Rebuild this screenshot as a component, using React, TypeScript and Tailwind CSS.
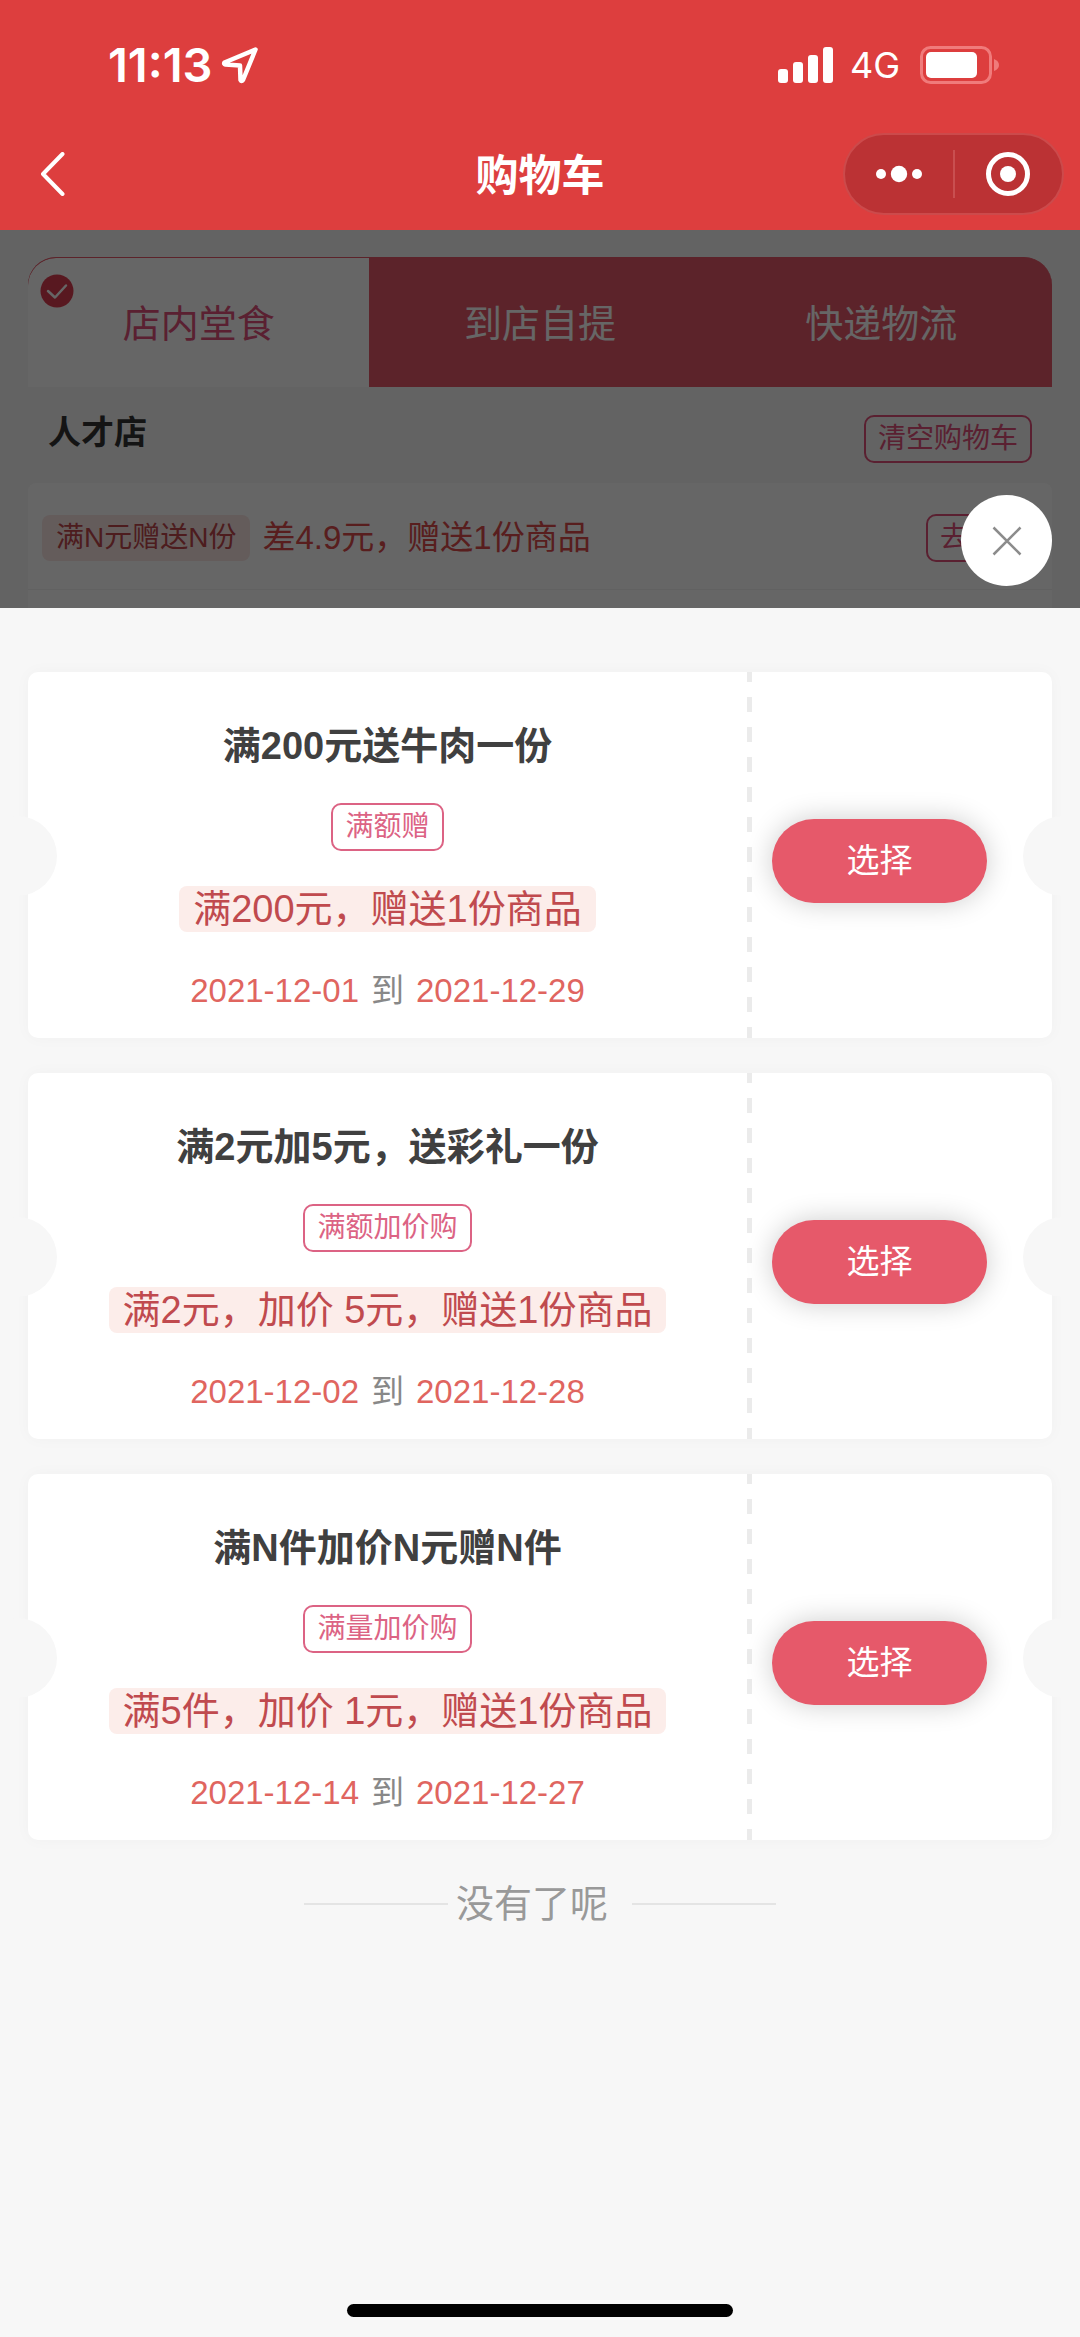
import { useState } from 'react';

const tabs = ['店内堂食', '到店自提', '快递物流'];

const coupons = [
  { title: '满200元送牛肉一份', type: '满额赠', rule: '满200元，赠送1份商品', start: '2021-12-01', end: '2021-12-29' },
  { title: '满2元加5元，送彩礼一份', type: '满额加价购', rule: '满2元，加价 5元，赠送1份商品', start: '2021-12-02', end: '2021-12-28' },
  { title: '满N件加价N元赠N件', type: '满量加价购', rule: '满5件，加价 1元，赠送1份商品', start: '2021-12-14', end: '2021-12-27' },
];

function StatusBar() {
  return (
    <div className="flex h-[118px] items-center justify-between pt-3 pr-20 pl-[108px]">
      <div className="flex items-center gap-2">
        <span className="font-['Inter',sans-serif] text-[47px] leading-[48px] font-semibold">11:13</span>
        <svg width="38" height="38" viewBox="0 0 38 38" fill="none" stroke="currentColor" strokeWidth="4.500" strokeLinejoin="round">
          <path d="M34.500 3.500 L3.500 16.500 Q2.500 18 4.500 18.500 L19 19.500 L19.500 34 Q20.500 36 22 34 Z" />
        </svg>
      </div>
      <div className="flex items-center">
        <svg width="56" height="36" viewBox="0 0 56 36" fill="currentColor">
          <rect x="0" y="22" width="10" height="14" rx="3" />
          <rect x="15" y="15" width="10" height="21" rx="3" />
          <rect x="30" y="8" width="10" height="28" rx="3" />
          <rect x="45" y="0" width="10" height="36" rx="3" />
        </svg>
        <span className="ml-4 font-['Inter',sans-serif] text-4xl leading-[48px]">4G</span>
        <svg className="ml-5" width="80" height="38" viewBox="0 0 80 38" fill="none">
          <rect x="1.500" y="1.500" width="69" height="35" rx="9" stroke="#f07b7b" strokeWidth="3" />
          <rect x="6" y="6" width="51" height="26" rx="5" fill="#fff" />
          <path d="M74 13 Q79 15 79 19 Q79 23 74 25 Z" fill="#f07b7b" />
        </svg>
      </div>
    </div>
  );
}

function NavBar() {
  return (
    <div className="grid h-28 grid-cols-[221px_1fr_221px] items-center px-4">
      <button type="button" aria-label="返回" className="justify-self-start pl-6">
        <svg width="26" height="44" viewBox="0 0 26 44" fill="none" stroke="currentColor" strokeWidth="4" strokeLinecap="round" strokeLinejoin="round">
          <path d="M22.500 2 L3 22 L22.500 42" />
        </svg>
      </button>
      <h1 className="pt-1 text-center text-[43px] leading-[48px] font-bold">购物车</h1>
      <div className="flex h-[82px] items-center rounded-full border-2 border-[#cc4a4b] bg-[#bb3234]">
        <button type="button" aria-label="更多" className="flex h-12 flex-1 items-center justify-center border-r-2 border-[#c94f50]">
          <svg width="48" height="20" viewBox="0 0 48 20" fill="currentColor">
            <circle cx="6" cy="10" r="5" />
            <circle cx="24" cy="10" r="8.200" />
            <circle cx="42" cy="10" r="5" />
          </svg>
        </button>
        <button type="button" aria-label="关闭小程序" className="flex flex-1 items-center justify-center">
          <svg width="46" height="46" viewBox="0 0 46 46">
            <circle cx="23" cy="23" r="19.500" fill="none" stroke="currentColor" strokeWidth="5" />
            <circle cx="23" cy="23" r="8" fill="currentColor" />
          </svg>
        </button>
      </div>
    </div>
  );
}

function CartPage() {
  const [active, setActive] = useState(0);

  return (
    <section className="relative overflow-hidden px-7 pt-[27px]">
      <div className="flex overflow-hidden rounded-t-[28px] border-t border-[#e6596a] bg-[#e6596a]">
        {tabs.map((tab, i) => (
          <button
            key={tab}
            type="button"
            onClick={() => setActive(i)}
            className={
              i === active
                ? 'relative h-[129px] flex-1 rounded-tl-[28px] bg-white pt-1 text-[38px] text-[#e0527a]'
                : 'relative h-[129px] flex-1 pt-1 text-[38px] text-white'
            }
          >
            {i === active && (
              <svg className="absolute top-4 left-3" width="34" height="34" viewBox="0 0 34 34" fill="none">
                <circle cx="17" cy="17" r="16.500" fill="#dd3e50" />
                <path d="M8 17 L15 23.500 L26 11.500" stroke="#fff" strokeWidth="2.500" strokeLinecap="round" strokeLinejoin="round" />
              </svg>
            )}
            {tab}
          </button>
        ))}
      </div>

      <div className="flex h-24 items-start justify-between px-5 pt-7">
        <h2 className="text-[33px] leading-9 font-bold text-[#333]">人才店</h2>
        <button type="button" className="h-12 rounded-[10px] border-2 border-[#e0527a] px-3 text-[28px] leading-[40px] text-[#e0527a]">
          清空购物车
        </button>
      </div>

      <div className="rounded-t-lg bg-white pb-[18px]">
        <div className="flex h-[107px] items-center border-b border-[#f2f2f2] px-[14px] pt-1">
          <span className="rounded-lg bg-[#fae6e4] px-[14px] text-[28px] leading-[46px] text-[#c0484c]">满N元赠送N份</span>
          <span className="ml-3 text-[33px] leading-[40px] text-[#dd4b4b]">差4.9元，赠送1份商品</span>
          <button type="button" className="ml-auto h-12 rounded-[10px] border-2 border-[#e0527a] px-3 text-[28px] leading-[40px] text-[#e0527a]">
            去凑单
          </button>
        </div>
      </div>

      <div className="absolute inset-0 bg-black/60" />
      <button
        type="button"
        aria-label="关闭"
        className="absolute right-7 bottom-[22px] flex size-[91px] items-center justify-center rounded-full bg-white"
      >
        <svg width="30" height="30" viewBox="0 0 30 30" fill="none" stroke="#8c8c8c" strokeWidth="2.500">
          <path d="M1.500 1.500 L28.500 28.500 M28.500 1.500 L1.500 28.500" />
        </svg>
      </button>
    </section>
  );
}

function CouponCard({ coupon }: { coupon: (typeof coupons)[number] }) {
  return (
    <li className="relative flex rounded-[10px] bg-white shadow-[0_0_16px_rgba(0,0,0,0.03)]">
      <div className="flex flex-1 flex-col items-center gap-[35px] pt-[52px] pb-[23px]">
        <h3 className="text-[38px] leading-[44px] font-bold text-[#404040]">{coupon.title}</h3>
        <span className="rounded-[10px] border-2 border-[#dc6384] px-3 text-[28px] leading-[44px] text-[#dc6384]">
          {coupon.type}
        </span>
        <p className="rounded-lg bg-[#fcedea] px-[14px] text-[38px] leading-[46px] text-[#c04a4e]">{coupon.rule}</p>
        <p className="flex gap-3 text-[33px] leading-[48px] text-[#e0655f]">
          <time>{coupon.start}</time>
          <span className="text-[#888]">到</span>
          <time>{coupon.end}</time>
        </p>
      </div>
      <div className="w-[5px] bg-[repeating-linear-gradient(to_bottom,#ebebeb_0px,#ebebeb_10px,transparent_10px,transparent_25px,#ebebeb_25px,#ebebeb_30px)]" />
      <div className="flex w-[300px] items-center pt-3 pl-5">
        <button
          type="button"
          className="h-[84px] w-[215px] rounded-full bg-[#e6596a] text-[33px] text-white shadow-[0_0_28px_rgba(0,0,0,0.2)]"
        >
          选择
        </button>
      </div>
      {/* ticket notches */}
      <div className="absolute top-36 -left-[51px] size-20 rounded-full bg-[#f7f7f7]" />
      <div className="absolute top-36 -right-[51px] size-20 rounded-full bg-[#f7f7f7]" />
    </li>
  );
}

export default function App() {
  return (
    <div className="flex min-h-screen flex-col overflow-x-hidden bg-[#f7f7f7] font-['Liberation_Sans','Noto_Sans_CJK_SC',sans-serif]">
      <header className="bg-[#dd3e3e] text-white">
        <StatusBar />
        <NavBar />
      </header>

      <CartPage />

      <main className="flex flex-1 flex-col px-7 pt-16">
        <ul className="flex flex-col gap-[35px]">
          {coupons.map((coupon) => (
            <CouponCard key={coupon.title} coupon={coupon} />
          ))}
        </ul>
        <div className="mt-10 flex items-center justify-center text-[38px] leading-[48px] text-[#999]">
          <span className="h-[2px] w-36 bg-[#e4e4e4]" />
          <span className="mr-6 ml-2">没有了呢</span>
          <span className="h-[2px] w-36 bg-[#e4e4e4]" />
        </div>
        <div className="mx-auto mt-auto mb-5 h-[13px] w-[386px] rounded-full bg-black" />
      </main>
    </div>
  );
}
